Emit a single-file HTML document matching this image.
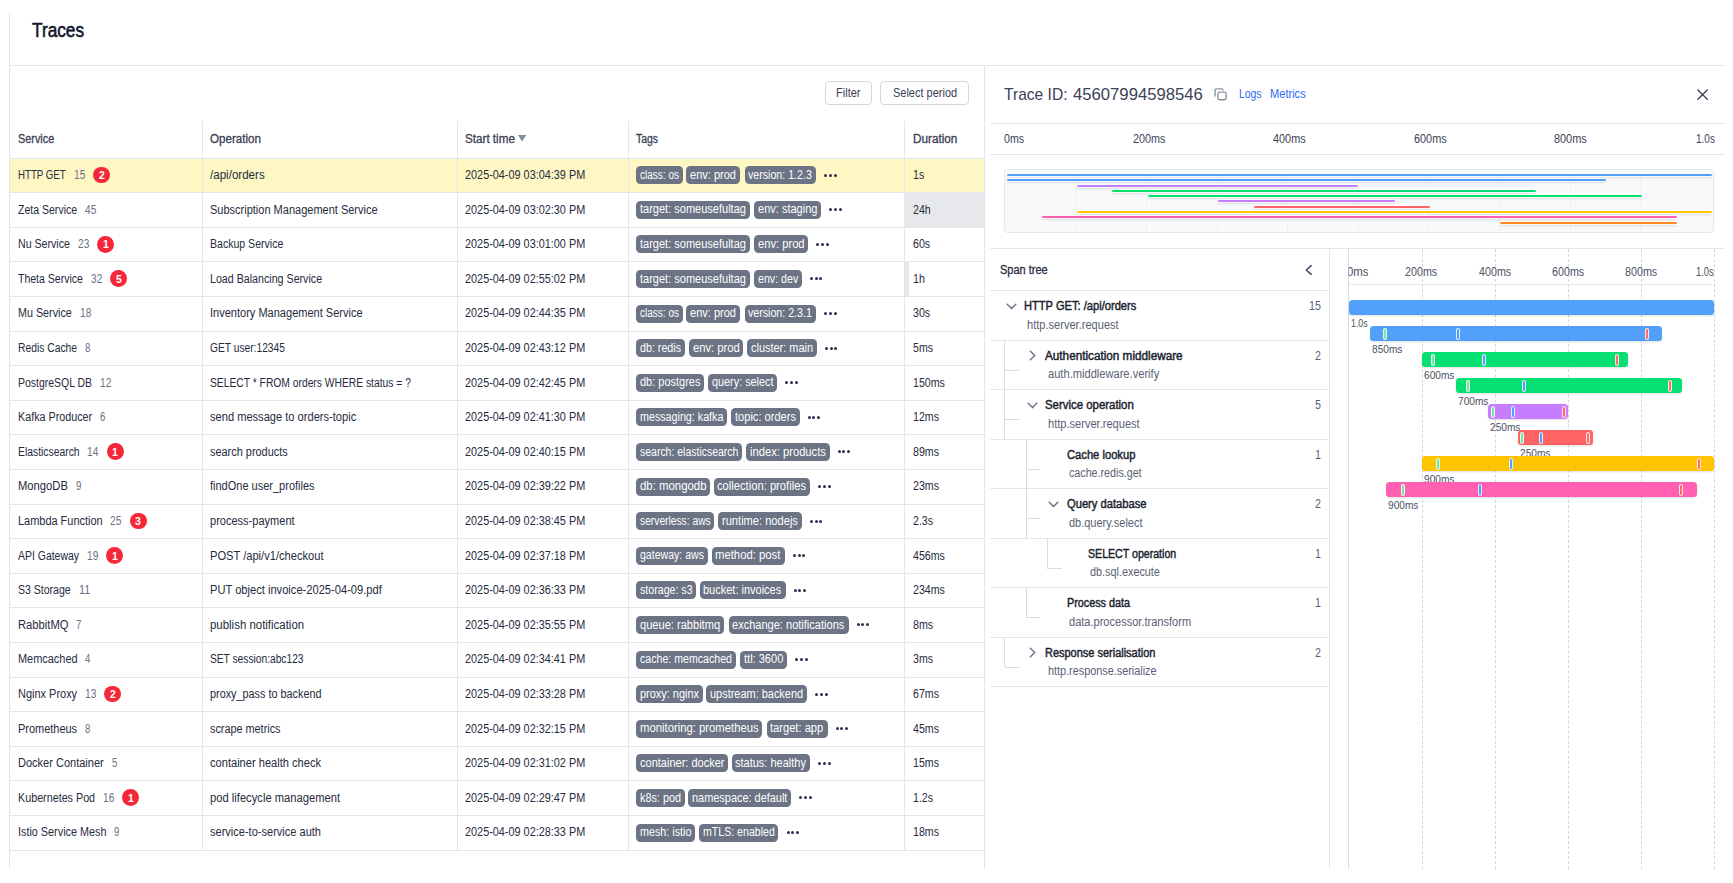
<!DOCTYPE html><html lang="en"><head><meta charset="utf-8"><title>Traces</title><style>

html,body{margin:0;padding:0;background:#fff}
body{width:1733px;height:883px;position:relative;overflow:hidden;font-family:"Liberation Sans", sans-serif}
#pg div,#pg svg,#pg span{position:absolute;display:block}
#pg span{white-space:nowrap;line-height:16px;height:16px;transform-origin:0 50%}

</style></head><body><div id="pg">
<div style="left:9.00px;top:14.00px;width:1.00px;height:855.00px;background:#e3e6ec"></div>
<div style="left:9.50px;top:64.90px;width:1715.30px;height:1.00px;background:#e3e6ec"></div>
<div style="left:824.50px;top:81.20px;width:47.20px;height:23.90px;border:1px solid #d3d7df;border-radius:4px;box-sizing:border-box;background:#fff"></div>
<div style="left:880.20px;top:81.20px;width:88.60px;height:23.90px;border:1px solid #d3d7df;border-radius:4px;box-sizing:border-box;background:#fff"></div>
<div style="left:10.00px;top:158.10px;width:974.30px;height:34.60px;background:#fef7c3"></div>
<div style="left:905.30px;top:192.70px;width:79.00px;height:34.60px;background:#e6e8ec"></div>
<div style="left:905.30px;top:261.90px;width:3.30px;height:34.60px;background:#e6e8ec"></div>
<svg style="left:518.3px;top:135px;width:8.2px;height:6.6px" viewBox="0 0 8.2 6.6"><path d="M0 0H8.2L4.1 6.6Z" fill="#7d8fa3"/></svg>
<div style="left:201.90px;top:120.50px;width:1.00px;height:729.60px;background:#e3e6ec"></div>
<div style="left:456.90px;top:120.50px;width:1.00px;height:729.60px;background:#e3e6ec"></div>
<div style="left:627.60px;top:120.50px;width:1.00px;height:729.60px;background:#e3e6ec"></div>
<div style="left:904.30px;top:120.50px;width:1.00px;height:729.60px;background:#e3e6ec"></div>
<div style="left:9.50px;top:157.60px;width:974.80px;height:1.00px;background:#e3e6ec"></div>
<div style="left:9.50px;top:192.20px;width:974.80px;height:1.00px;background:#e3e6ec"></div>
<div style="left:9.50px;top:226.80px;width:974.80px;height:1.00px;background:#e3e6ec"></div>
<div style="left:9.50px;top:261.40px;width:974.80px;height:1.00px;background:#e3e6ec"></div>
<div style="left:9.50px;top:296.00px;width:974.80px;height:1.00px;background:#e3e6ec"></div>
<div style="left:9.50px;top:330.60px;width:974.80px;height:1.00px;background:#e3e6ec"></div>
<div style="left:9.50px;top:365.20px;width:974.80px;height:1.00px;background:#e3e6ec"></div>
<div style="left:9.50px;top:399.80px;width:974.80px;height:1.00px;background:#e3e6ec"></div>
<div style="left:9.50px;top:434.40px;width:974.80px;height:1.00px;background:#e3e6ec"></div>
<div style="left:9.50px;top:469.00px;width:974.80px;height:1.00px;background:#e3e6ec"></div>
<div style="left:9.50px;top:503.60px;width:974.80px;height:1.00px;background:#e3e6ec"></div>
<div style="left:9.50px;top:538.20px;width:974.80px;height:1.00px;background:#e3e6ec"></div>
<div style="left:9.50px;top:572.80px;width:974.80px;height:1.00px;background:#e3e6ec"></div>
<div style="left:9.50px;top:607.40px;width:974.80px;height:1.00px;background:#e3e6ec"></div>
<div style="left:9.50px;top:642.00px;width:974.80px;height:1.00px;background:#e3e6ec"></div>
<div style="left:9.50px;top:676.60px;width:974.80px;height:1.00px;background:#e3e6ec"></div>
<div style="left:9.50px;top:711.20px;width:974.80px;height:1.00px;background:#e3e6ec"></div>
<div style="left:9.50px;top:745.80px;width:974.80px;height:1.00px;background:#e3e6ec"></div>
<div style="left:9.50px;top:780.40px;width:974.80px;height:1.00px;background:#e3e6ec"></div>
<div style="left:9.50px;top:815.00px;width:974.80px;height:1.00px;background:#e3e6ec"></div>
<div style="left:9.50px;top:849.60px;width:974.80px;height:1.00px;background:#e3e6ec"></div>
<div style="left:93.07px;top:166.60px;width:16.80px;height:16.80px;background:#f5283a;border-radius:50%"></div>
<div style="left:636.10px;top:166.20px;width:46.60px;height:18.00px;background:#6b7385;border-radius:4.5px"></div>
<div style="left:686.00px;top:166.20px;width:53.60px;height:18.00px;background:#6b7385;border-radius:4.5px"></div>
<div style="left:744.60px;top:166.20px;width:71.40px;height:18.00px;background:#6b7385;border-radius:4.5px"></div>
<div style="left:824.00px;top:173.60px;width:3.00px;height:3.00px;background:#2a3050;border-radius:50%"></div>
<div style="left:828.75px;top:173.60px;width:3.00px;height:3.00px;background:#2a3050;border-radius:50%"></div>
<div style="left:833.50px;top:173.60px;width:3.00px;height:3.00px;background:#2a3050;border-radius:50%"></div>
<div style="left:636.10px;top:200.80px;width:113.50px;height:18.00px;background:#6b7385;border-radius:4.5px"></div>
<div style="left:754.00px;top:200.80px;width:67.00px;height:18.00px;background:#6b7385;border-radius:4.5px"></div>
<div style="left:829.00px;top:208.20px;width:3.00px;height:3.00px;background:#2a3050;border-radius:50%"></div>
<div style="left:833.75px;top:208.20px;width:3.00px;height:3.00px;background:#2a3050;border-radius:50%"></div>
<div style="left:838.50px;top:208.20px;width:3.00px;height:3.00px;background:#2a3050;border-radius:50%"></div>
<div style="left:97.27px;top:235.80px;width:16.80px;height:16.80px;background:#f5283a;border-radius:50%"></div>
<div style="left:636.10px;top:235.40px;width:113.50px;height:18.00px;background:#6b7385;border-radius:4.5px"></div>
<div style="left:754.00px;top:235.40px;width:54.20px;height:18.00px;background:#6b7385;border-radius:4.5px"></div>
<div style="left:816.20px;top:242.80px;width:3.00px;height:3.00px;background:#2a3050;border-radius:50%"></div>
<div style="left:820.95px;top:242.80px;width:3.00px;height:3.00px;background:#2a3050;border-radius:50%"></div>
<div style="left:825.70px;top:242.80px;width:3.00px;height:3.00px;background:#2a3050;border-radius:50%"></div>
<div style="left:110.27px;top:270.40px;width:16.80px;height:16.80px;background:#f5283a;border-radius:50%"></div>
<div style="left:636.10px;top:270.00px;width:113.50px;height:18.00px;background:#6b7385;border-radius:4.5px"></div>
<div style="left:754.00px;top:270.00px;width:47.80px;height:18.00px;background:#6b7385;border-radius:4.5px"></div>
<div style="left:809.80px;top:277.40px;width:3.00px;height:3.00px;background:#2a3050;border-radius:50%"></div>
<div style="left:814.55px;top:277.40px;width:3.00px;height:3.00px;background:#2a3050;border-radius:50%"></div>
<div style="left:819.30px;top:277.40px;width:3.00px;height:3.00px;background:#2a3050;border-radius:50%"></div>
<div style="left:636.10px;top:304.60px;width:46.60px;height:18.00px;background:#6b7385;border-radius:4.5px"></div>
<div style="left:686.00px;top:304.60px;width:53.60px;height:18.00px;background:#6b7385;border-radius:4.5px"></div>
<div style="left:744.60px;top:304.60px;width:71.40px;height:18.00px;background:#6b7385;border-radius:4.5px"></div>
<div style="left:824.00px;top:312.00px;width:3.00px;height:3.00px;background:#2a3050;border-radius:50%"></div>
<div style="left:828.75px;top:312.00px;width:3.00px;height:3.00px;background:#2a3050;border-radius:50%"></div>
<div style="left:833.50px;top:312.00px;width:3.00px;height:3.00px;background:#2a3050;border-radius:50%"></div>
<div style="left:636.10px;top:339.20px;width:48.60px;height:18.00px;background:#6b7385;border-radius:4.5px"></div>
<div style="left:689.10px;top:339.20px;width:54.40px;height:18.00px;background:#6b7385;border-radius:4.5px"></div>
<div style="left:747.10px;top:339.20px;width:69.70px;height:18.00px;background:#6b7385;border-radius:4.5px"></div>
<div style="left:824.80px;top:346.60px;width:3.00px;height:3.00px;background:#2a3050;border-radius:50%"></div>
<div style="left:829.55px;top:346.60px;width:3.00px;height:3.00px;background:#2a3050;border-radius:50%"></div>
<div style="left:834.30px;top:346.60px;width:3.00px;height:3.00px;background:#2a3050;border-radius:50%"></div>
<div style="left:636.10px;top:373.80px;width:68.00px;height:18.00px;background:#6b7385;border-radius:4.5px"></div>
<div style="left:708.30px;top:373.80px;width:69.10px;height:18.00px;background:#6b7385;border-radius:4.5px"></div>
<div style="left:785.40px;top:381.20px;width:3.00px;height:3.00px;background:#2a3050;border-radius:50%"></div>
<div style="left:790.15px;top:381.20px;width:3.00px;height:3.00px;background:#2a3050;border-radius:50%"></div>
<div style="left:794.90px;top:381.20px;width:3.00px;height:3.00px;background:#2a3050;border-radius:50%"></div>
<div style="left:636.10px;top:408.40px;width:91.00px;height:18.00px;background:#6b7385;border-radius:4.5px"></div>
<div style="left:731.00px;top:408.40px;width:68.60px;height:18.00px;background:#6b7385;border-radius:4.5px"></div>
<div style="left:807.60px;top:415.80px;width:3.00px;height:3.00px;background:#2a3050;border-radius:50%"></div>
<div style="left:812.35px;top:415.80px;width:3.00px;height:3.00px;background:#2a3050;border-radius:50%"></div>
<div style="left:817.10px;top:415.80px;width:3.00px;height:3.00px;background:#2a3050;border-radius:50%"></div>
<div style="left:106.97px;top:443.40px;width:16.80px;height:16.80px;background:#f5283a;border-radius:50%"></div>
<div style="left:636.10px;top:443.00px;width:106.00px;height:18.00px;background:#6b7385;border-radius:4.5px"></div>
<div style="left:746.00px;top:443.00px;width:83.50px;height:18.00px;background:#6b7385;border-radius:4.5px"></div>
<div style="left:837.50px;top:450.40px;width:3.00px;height:3.00px;background:#2a3050;border-radius:50%"></div>
<div style="left:842.25px;top:450.40px;width:3.00px;height:3.00px;background:#2a3050;border-radius:50%"></div>
<div style="left:847.00px;top:450.40px;width:3.00px;height:3.00px;background:#2a3050;border-radius:50%"></div>
<div style="left:636.10px;top:477.60px;width:74.10px;height:18.00px;background:#6b7385;border-radius:4.5px"></div>
<div style="left:713.80px;top:477.60px;width:96.60px;height:18.00px;background:#6b7385;border-radius:4.5px"></div>
<div style="left:818.40px;top:485.00px;width:3.00px;height:3.00px;background:#2a3050;border-radius:50%"></div>
<div style="left:823.15px;top:485.00px;width:3.00px;height:3.00px;background:#2a3050;border-radius:50%"></div>
<div style="left:827.90px;top:485.00px;width:3.00px;height:3.00px;background:#2a3050;border-radius:50%"></div>
<div style="left:129.97px;top:512.60px;width:16.80px;height:16.80px;background:#f5283a;border-radius:50%"></div>
<div style="left:636.10px;top:512.20px;width:78.30px;height:18.00px;background:#6b7385;border-radius:4.5px"></div>
<div style="left:718.30px;top:512.20px;width:83.50px;height:18.00px;background:#6b7385;border-radius:4.5px"></div>
<div style="left:809.80px;top:519.60px;width:3.00px;height:3.00px;background:#2a3050;border-radius:50%"></div>
<div style="left:814.55px;top:519.60px;width:3.00px;height:3.00px;background:#2a3050;border-radius:50%"></div>
<div style="left:819.30px;top:519.60px;width:3.00px;height:3.00px;background:#2a3050;border-radius:50%"></div>
<div style="left:106.37px;top:547.20px;width:16.80px;height:16.80px;background:#f5283a;border-radius:50%"></div>
<div style="left:636.10px;top:546.80px;width:71.60px;height:18.00px;background:#6b7385;border-radius:4.5px"></div>
<div style="left:711.90px;top:546.80px;width:73.00px;height:18.00px;background:#6b7385;border-radius:4.5px"></div>
<div style="left:792.90px;top:554.20px;width:3.00px;height:3.00px;background:#2a3050;border-radius:50%"></div>
<div style="left:797.65px;top:554.20px;width:3.00px;height:3.00px;background:#2a3050;border-radius:50%"></div>
<div style="left:802.40px;top:554.20px;width:3.00px;height:3.00px;background:#2a3050;border-radius:50%"></div>
<div style="left:636.10px;top:581.40px;width:60.20px;height:18.00px;background:#6b7385;border-radius:4.5px"></div>
<div style="left:699.90px;top:581.40px;width:85.80px;height:18.00px;background:#6b7385;border-radius:4.5px"></div>
<div style="left:793.70px;top:588.80px;width:3.00px;height:3.00px;background:#2a3050;border-radius:50%"></div>
<div style="left:798.45px;top:588.80px;width:3.00px;height:3.00px;background:#2a3050;border-radius:50%"></div>
<div style="left:803.20px;top:588.80px;width:3.00px;height:3.00px;background:#2a3050;border-radius:50%"></div>
<div style="left:636.10px;top:616.00px;width:87.70px;height:18.00px;background:#6b7385;border-radius:4.5px"></div>
<div style="left:728.80px;top:616.00px;width:119.90px;height:18.00px;background:#6b7385;border-radius:4.5px"></div>
<div style="left:856.70px;top:623.40px;width:3.00px;height:3.00px;background:#2a3050;border-radius:50%"></div>
<div style="left:861.45px;top:623.40px;width:3.00px;height:3.00px;background:#2a3050;border-radius:50%"></div>
<div style="left:866.20px;top:623.40px;width:3.00px;height:3.00px;background:#2a3050;border-radius:50%"></div>
<div style="left:636.10px;top:650.60px;width:99.60px;height:18.00px;background:#6b7385;border-radius:4.5px"></div>
<div style="left:740.20px;top:650.60px;width:46.90px;height:18.00px;background:#6b7385;border-radius:4.5px"></div>
<div style="left:795.10px;top:658.00px;width:3.00px;height:3.00px;background:#2a3050;border-radius:50%"></div>
<div style="left:799.85px;top:658.00px;width:3.00px;height:3.00px;background:#2a3050;border-radius:50%"></div>
<div style="left:804.60px;top:658.00px;width:3.00px;height:3.00px;background:#2a3050;border-radius:50%"></div>
<div style="left:104.47px;top:685.60px;width:16.80px;height:16.80px;background:#f5283a;border-radius:50%"></div>
<div style="left:636.10px;top:685.20px;width:66.60px;height:18.00px;background:#6b7385;border-radius:4.5px"></div>
<div style="left:706.30px;top:685.20px;width:100.70px;height:18.00px;background:#6b7385;border-radius:4.5px"></div>
<div style="left:815.00px;top:692.60px;width:3.00px;height:3.00px;background:#2a3050;border-radius:50%"></div>
<div style="left:819.75px;top:692.60px;width:3.00px;height:3.00px;background:#2a3050;border-radius:50%"></div>
<div style="left:824.50px;top:692.60px;width:3.00px;height:3.00px;background:#2a3050;border-radius:50%"></div>
<div style="left:636.10px;top:719.80px;width:126.30px;height:18.00px;background:#6b7385;border-radius:4.5px"></div>
<div style="left:766.80px;top:719.80px;width:60.80px;height:18.00px;background:#6b7385;border-radius:4.5px"></div>
<div style="left:835.60px;top:727.20px;width:3.00px;height:3.00px;background:#2a3050;border-radius:50%"></div>
<div style="left:840.35px;top:727.20px;width:3.00px;height:3.00px;background:#2a3050;border-radius:50%"></div>
<div style="left:845.10px;top:727.20px;width:3.00px;height:3.00px;background:#2a3050;border-radius:50%"></div>
<div style="left:636.10px;top:754.40px;width:92.10px;height:18.00px;background:#6b7385;border-radius:4.5px"></div>
<div style="left:731.90px;top:754.40px;width:78.50px;height:18.00px;background:#6b7385;border-radius:4.5px"></div>
<div style="left:818.40px;top:761.80px;width:3.00px;height:3.00px;background:#2a3050;border-radius:50%"></div>
<div style="left:823.15px;top:761.80px;width:3.00px;height:3.00px;background:#2a3050;border-radius:50%"></div>
<div style="left:827.90px;top:761.80px;width:3.00px;height:3.00px;background:#2a3050;border-radius:50%"></div>
<div style="left:122.47px;top:789.40px;width:16.80px;height:16.80px;background:#f5283a;border-radius:50%"></div>
<div style="left:636.10px;top:789.00px;width:48.60px;height:18.00px;background:#6b7385;border-radius:4.5px"></div>
<div style="left:688.30px;top:789.00px;width:103.00px;height:18.00px;background:#6b7385;border-radius:4.5px"></div>
<div style="left:799.30px;top:796.40px;width:3.00px;height:3.00px;background:#2a3050;border-radius:50%"></div>
<div style="left:804.05px;top:796.40px;width:3.00px;height:3.00px;background:#2a3050;border-radius:50%"></div>
<div style="left:808.80px;top:796.40px;width:3.00px;height:3.00px;background:#2a3050;border-radius:50%"></div>
<div style="left:636.10px;top:823.60px;width:59.10px;height:18.00px;background:#6b7385;border-radius:4.5px"></div>
<div style="left:699.10px;top:823.60px;width:79.40px;height:18.00px;background:#6b7385;border-radius:4.5px"></div>
<div style="left:786.50px;top:831.00px;width:3.00px;height:3.00px;background:#2a3050;border-radius:50%"></div>
<div style="left:791.25px;top:831.00px;width:3.00px;height:3.00px;background:#2a3050;border-radius:50%"></div>
<div style="left:796.00px;top:831.00px;width:3.00px;height:3.00px;background:#2a3050;border-radius:50%"></div>
<div style="left:983.80px;top:65.40px;width:1.00px;height:803.60px;background:#e3e6ec"></div>
<svg style="left:1213px;top:86.5px;width:15px;height:15px" viewBox="0 0 15 15" fill="none" stroke="#8b919d" stroke-width="1.35" stroke-linecap="round"><rect x="4.9" y="5.1" width="8.3" height="7.6" rx="1.8"/><path d="M2 9.1V3.6Q2 1.8 3.8 1.8H8.6Q9.9 1.8 10.2 2.9"/></svg>
<svg style="left:1697.2px;top:88.6px;width:11.2px;height:11.2px" viewBox="0 0 11.2 11.2" fill="none" stroke="#3c4257" stroke-width="1.35" stroke-linecap="round"><path d="M0.9 0.9L10.3 10.3M10.3 0.9L0.9 10.3"/></svg>
<div style="left:989.70px;top:123.00px;width:735.10px;height:1.00px;background:#e3e6ec"></div>
<div style="left:989.70px;top:153.50px;width:735.10px;height:1.00px;background:#e3e6ec"></div>
<div style="left:1004.10px;top:169.20px;width:709.80px;height:63.40px;background:#f8f9fb;border:1px solid #e6e8ec;border-radius:3.5px;box-sizing:border-box"></div>
<div style="left:1075.65px;top:170.20px;width:0;height:61.40px;border-left:1px dashed #eceef2"></div>
<div style="left:1146.20px;top:170.20px;width:0;height:61.40px;border-left:1px dashed #eceef2"></div>
<div style="left:1216.75px;top:170.20px;width:0;height:61.40px;border-left:1px dashed #eceef2"></div>
<div style="left:1287.30px;top:170.20px;width:0;height:61.40px;border-left:1px dashed #eceef2"></div>
<div style="left:1357.85px;top:170.20px;width:0;height:61.40px;border-left:1px dashed #eceef2"></div>
<div style="left:1428.40px;top:170.20px;width:0;height:61.40px;border-left:1px dashed #eceef2"></div>
<div style="left:1498.95px;top:170.20px;width:0;height:61.40px;border-left:1px dashed #eceef2"></div>
<div style="left:1569.50px;top:170.20px;width:0;height:61.40px;border-left:1px dashed #eceef2"></div>
<div style="left:1640.05px;top:170.20px;width:0;height:61.40px;border-left:1px dashed #eceef2"></div>
<div style="left:1006.60px;top:173.90px;width:705.50px;height:2.10px;background:#52a0fb;border-radius:1px;box-shadow:0 0 0 0.8px rgba(255,255,255,.85),0 2px 2.5px rgba(0,0,0,.13)"></div>
<div style="left:1006.60px;top:179.20px;width:599.67px;height:2.10px;background:#52a0fb;border-radius:1px;box-shadow:0 0 0 0.8px rgba(255,255,255,.85),0 2px 2.5px rgba(0,0,0,.13)"></div>
<div style="left:1077.15px;top:184.50px;width:280.44px;height:2.10px;background:#c77dff;border-radius:1px;box-shadow:0 0 0 0.8px rgba(255,255,255,.85),0 2px 2.5px rgba(0,0,0,.13)"></div>
<div style="left:1112.42px;top:189.80px;width:423.30px;height:2.10px;background:#06df72;border-radius:1px;box-shadow:0 0 0 0.8px rgba(255,255,255,.85),0 2px 2.5px rgba(0,0,0,.13)"></div>
<div style="left:1147.70px;top:195.10px;width:493.85px;height:2.10px;background:#06df72;border-radius:1px;box-shadow:0 0 0 0.8px rgba(255,255,255,.85),0 2px 2.5px rgba(0,0,0,.13)"></div>
<div style="left:1218.25px;top:200.40px;width:176.38px;height:2.10px;background:#c77dff;border-radius:1px;box-shadow:0 0 0 0.8px rgba(255,255,255,.85),0 2px 2.5px rgba(0,0,0,.13)"></div>
<div style="left:1253.53px;top:205.70px;width:176.38px;height:2.10px;background:#ff6363;border-radius:1px;box-shadow:0 0 0 0.8px rgba(255,255,255,.85),0 2px 2.5px rgba(0,0,0,.13)"></div>
<div style="left:1077.15px;top:211.00px;width:634.95px;height:2.10px;background:#ffc400;border-radius:1px;box-shadow:0 0 0 0.8px rgba(255,255,255,.85),0 2px 2.5px rgba(0,0,0,.13)"></div>
<div style="left:1041.88px;top:216.30px;width:634.95px;height:2.10px;background:#ff60b2;border-radius:1px;box-shadow:0 0 0 0.8px rgba(255,255,255,.85),0 2px 2.5px rgba(0,0,0,.13)"></div>
<div style="left:1500.45px;top:221.60px;width:176.38px;height:2.10px;background:#ff8a1c;border-radius:1px;box-shadow:0 0 0 0.8px rgba(255,255,255,.85),0 2px 2.5px rgba(0,0,0,.13)"></div>
<div style="left:989.70px;top:248.10px;width:735.10px;height:1.00px;background:#e3e6ec"></div>
<div style="left:1329.00px;top:248.60px;width:1.00px;height:620.40px;background:#e3e6ec"></div>
<svg style="left:1303.5px;top:264px;width:10px;height:12px" viewBox="0 0 10 12" fill="none" stroke="#3c4257" stroke-width="1.4" stroke-linecap="round" stroke-linejoin="round"><path d="M7.2 1.6L2.2 6L7.2 10.4"/></svg>
<div style="left:989.70px;top:290.05px;width:339.80px;height:1.00px;background:#e3e6ec"></div>
<div style="left:989.70px;top:339.55px;width:339.80px;height:1.00px;background:#e3e6ec"></div>
<div style="left:989.70px;top:389.05px;width:339.80px;height:1.00px;background:#e3e6ec"></div>
<div style="left:989.70px;top:438.55px;width:339.80px;height:1.00px;background:#e3e6ec"></div>
<div style="left:989.70px;top:488.05px;width:339.80px;height:1.00px;background:#e3e6ec"></div>
<div style="left:989.70px;top:537.55px;width:339.80px;height:1.00px;background:#e3e6ec"></div>
<div style="left:989.70px;top:587.05px;width:339.80px;height:1.00px;background:#e3e6ec"></div>
<div style="left:989.70px;top:636.55px;width:339.80px;height:1.00px;background:#e3e6ec"></div>
<div style="left:989.70px;top:686.05px;width:339.80px;height:1.00px;background:#e3e6ec"></div>
<svg style="left:1005.50px;top:301.75px;width:11px;height:9px" viewBox="0 0 11 9" fill="none" stroke="#6b7888" stroke-width="1.5" stroke-linecap="round" stroke-linejoin="round"><path d="M1.2 2.2L5.5 6.6L9.8 2.2"/></svg>
<div style="left:1004.20px;top:340.05px;width:1.00px;height:49.50px;background:#d9dce3"></div>
<div style="left:1004.70px;top:369.75px;width:14.40px;height:1.00px;background:#d9dce3"></div>
<svg style="left:1028.10px;top:349.65px;width:9px;height:11px" viewBox="0 0 9 11" fill="none" stroke="#6b7888" stroke-width="1.5" stroke-linecap="round" stroke-linejoin="round"><path d="M2.4 1.2L6.8 5.5L2.4 9.8"/></svg>
<div style="left:1004.20px;top:389.55px;width:1.00px;height:49.50px;background:#d9dce3"></div>
<div style="left:1004.70px;top:419.25px;width:14.40px;height:1.00px;background:#d9dce3"></div>
<svg style="left:1026.80px;top:400.75px;width:11px;height:9px" viewBox="0 0 11 9" fill="none" stroke="#6b7888" stroke-width="1.5" stroke-linecap="round" stroke-linejoin="round"><path d="M1.2 2.2L5.5 6.6L9.8 2.2"/></svg>
<div style="left:1025.50px;top:439.05px;width:1.00px;height:49.50px;background:#d9dce3"></div>
<div style="left:1026.00px;top:468.75px;width:14.40px;height:1.00px;background:#d9dce3"></div>
<div style="left:1025.50px;top:488.55px;width:1.00px;height:49.50px;background:#d9dce3"></div>
<div style="left:1026.00px;top:518.25px;width:14.40px;height:1.00px;background:#d9dce3"></div>
<svg style="left:1048.10px;top:499.75px;width:11px;height:9px" viewBox="0 0 11 9" fill="none" stroke="#6b7888" stroke-width="1.5" stroke-linecap="round" stroke-linejoin="round"><path d="M1.2 2.2L5.5 6.6L9.8 2.2"/></svg>
<div style="left:1046.80px;top:538.05px;width:1.00px;height:30.20px;background:#d9dce3"></div>
<div style="left:1047.30px;top:567.75px;width:14.40px;height:1.00px;background:#d9dce3"></div>
<div style="left:1025.50px;top:587.55px;width:1.00px;height:30.20px;background:#d9dce3"></div>
<div style="left:1026.00px;top:617.25px;width:14.40px;height:1.00px;background:#d9dce3"></div>
<div style="left:1004.20px;top:637.05px;width:1.00px;height:30.20px;background:#d9dce3"></div>
<div style="left:1004.70px;top:666.75px;width:14.40px;height:1.00px;background:#d9dce3"></div>
<svg style="left:1028.10px;top:646.65px;width:9px;height:11px" viewBox="0 0 9 11" fill="none" stroke="#6b7888" stroke-width="1.5" stroke-linecap="round" stroke-linejoin="round"><path d="M2.4 1.2L6.8 5.5L2.4 9.8"/></svg>
<div style="left:1348.10px;top:248.60px;width:1.00px;height:620.40px;background:#d9dce3"></div>
<div style="left:1348.60px;top:284.40px;width:366.00px;height:1.00px;background:#e6e8ee"></div>
<div style="left:1421.50px;top:249px;width:0;height:620px;border-left:1px dashed #d4d7de"></div>
<div style="left:1494.70px;top:249px;width:0;height:620px;border-left:1px dashed #d4d7de"></div>
<div style="left:1567.90px;top:249px;width:0;height:620px;border-left:1px dashed #d4d7de"></div>
<div style="left:1641.10px;top:249px;width:0;height:620px;border-left:1px dashed #d4d7de"></div>
<div style="left:1714.30px;top:249px;width:0;height:620px;border-left:1px dashed #d4d7de"></div>
<div style="left:1348.60px;top:300.30px;width:365.90px;height:14.60px;background:#52a0fb;border-radius:3.5px;box-shadow:0 1px 2px rgba(0,0,0,.13);z-index:10"></div>
<div style="left:1369.60px;top:326.30px;width:292.90px;height:14.60px;background:#52a0fb;border-radius:3.5px;box-shadow:0 1px 2px rgba(0,0,0,.13);z-index:12"></div>
<div style="left:1383.04px;top:327.80px;width:4.00px;height:11.80px;background:#78e6a4;border:1px solid rgba(255,255,255,.82);border-radius:2.2px;box-sizing:border-box;z-index:12"></div>
<div style="left:1456.07px;top:327.80px;width:4.00px;height:11.80px;background:#52a0fb;border:1px solid rgba(255,255,255,.82);border-radius:2.2px;box-sizing:border-box;z-index:12"></div>
<div style="left:1645.26px;top:327.80px;width:4.00px;height:11.80px;background:#ff6b6b;border:1px solid rgba(255,255,255,.82);border-radius:2.2px;box-sizing:border-box;z-index:12"></div>
<div style="left:1422.10px;top:352.30px;width:205.90px;height:14.60px;background:#06df72;border-radius:3.5px;box-shadow:0 1px 2px rgba(0,0,0,.13);z-index:14"></div>
<div style="left:1431.19px;top:353.80px;width:4.00px;height:11.80px;background:#78e6a4;border:1px solid rgba(255,255,255,.82);border-radius:2.2px;box-sizing:border-box;z-index:14"></div>
<div style="left:1482.47px;top:353.80px;width:4.00px;height:11.80px;background:#52a0fb;border:1px solid rgba(255,255,255,.82);border-radius:2.2px;box-sizing:border-box;z-index:14"></div>
<div style="left:1615.11px;top:353.80px;width:4.00px;height:11.80px;background:#ff6b6b;border:1px solid rgba(255,255,255,.82);border-radius:2.2px;box-sizing:border-box;z-index:14"></div>
<div style="left:1455.60px;top:378.30px;width:226.80px;height:14.60px;background:#06df72;border-radius:3.5px;box-shadow:0 1px 2px rgba(0,0,0,.13);z-index:16"></div>
<div style="left:1465.74px;top:379.80px;width:4.00px;height:11.80px;background:#78e6a4;border:1px solid rgba(255,255,255,.82);border-radius:2.2px;box-sizing:border-box;z-index:16"></div>
<div style="left:1522.24px;top:379.80px;width:4.00px;height:11.80px;background:#52a0fb;border:1px solid rgba(255,255,255,.82);border-radius:2.2px;box-sizing:border-box;z-index:16"></div>
<div style="left:1668.46px;top:379.80px;width:4.00px;height:11.80px;background:#ff6b6b;border:1px solid rgba(255,255,255,.82);border-radius:2.2px;box-sizing:border-box;z-index:16"></div>
<div style="left:1488.10px;top:404.30px;width:80.20px;height:14.60px;background:#c77dff;border-radius:3.5px;box-shadow:0 1px 2px rgba(0,0,0,.13);z-index:18"></div>
<div style="left:1490.91px;top:405.80px;width:4.00px;height:11.80px;background:#78e6a4;border:1px solid rgba(255,255,255,.82);border-radius:2.2px;box-sizing:border-box;z-index:18"></div>
<div style="left:1510.76px;top:405.80px;width:4.00px;height:11.80px;background:#52a0fb;border:1px solid rgba(255,255,255,.82);border-radius:2.2px;box-sizing:border-box;z-index:18"></div>
<div style="left:1561.69px;top:405.80px;width:4.00px;height:11.80px;background:#ff6b6b;border:1px solid rgba(255,255,255,.82);border-radius:2.2px;box-sizing:border-box;z-index:18"></div>
<div style="left:1517.60px;top:430.30px;width:75.20px;height:14.60px;background:#ff6363;border-radius:3.5px;box-shadow:0 1px 2px rgba(0,0,0,.13);z-index:20"></div>
<div style="left:1520.16px;top:431.80px;width:4.00px;height:11.80px;background:#78e6a4;border:1px solid rgba(255,255,255,.82);border-radius:2.2px;box-sizing:border-box;z-index:20"></div>
<div style="left:1538.76px;top:431.80px;width:4.00px;height:11.80px;background:#52a0fb;border:1px solid rgba(255,255,255,.82);border-radius:2.2px;box-sizing:border-box;z-index:20"></div>
<div style="left:1586.44px;top:431.80px;width:4.00px;height:11.80px;background:#ff6b6b;border:1px solid rgba(255,255,255,.82);border-radius:2.2px;box-sizing:border-box;z-index:20"></div>
<div style="left:1422.30px;top:456.30px;width:292.20px;height:14.60px;background:#ffc400;border-radius:3.5px;box-shadow:0 1px 2px rgba(0,0,0,.13);z-index:22"></div>
<div style="left:1435.71px;top:457.80px;width:4.00px;height:11.80px;background:#78e6a4;border:1px solid rgba(255,255,255,.82);border-radius:2.2px;box-sizing:border-box;z-index:22"></div>
<div style="left:1508.56px;top:457.80px;width:4.00px;height:11.80px;background:#52a0fb;border:1px solid rgba(255,255,255,.82);border-radius:2.2px;box-sizing:border-box;z-index:22"></div>
<div style="left:1697.29px;top:457.80px;width:4.00px;height:11.80px;background:#ff6b6b;border:1px solid rgba(255,255,255,.82);border-radius:2.2px;box-sizing:border-box;z-index:22"></div>
<div style="left:1386.30px;top:482.30px;width:310.60px;height:14.60px;background:#ff60b2;border-radius:3.5px;box-shadow:0 1px 2px rgba(0,0,0,.13);z-index:24"></div>
<div style="left:1400.63px;top:483.80px;width:4.00px;height:11.80px;background:#78e6a4;border:1px solid rgba(255,255,255,.82);border-radius:2.2px;box-sizing:border-box;z-index:24"></div>
<div style="left:1478.08px;top:483.80px;width:4.00px;height:11.80px;background:#52a0fb;border:1px solid rgba(255,255,255,.82);border-radius:2.2px;box-sizing:border-box;z-index:24"></div>
<div style="left:1678.77px;top:483.80px;width:4.00px;height:11.80px;background:#ff6b6b;border:1px solid rgba(255,255,255,.82);border-radius:2.2px;box-sizing:border-box;z-index:24"></div>
<span style="font-size:20px;font-weight:400;color:#14182c;-webkit-text-stroke:0.6px;left:32.40px;top:21.50px;transform:scaleX(0.8627);">Traces</span>
<span style="font-size:12px;font-weight:400;color:#3a4056;left:836.40px;top:85.20px;transform:scaleX(0.9186);">Filter</span>
<span style="font-size:12px;font-weight:400;color:#3a4056;left:892.70px;top:85.20px;transform:scaleX(0.9151);">Select period</span>
<span style="font-size:12px;font-weight:400;color:#3a4056;-webkit-text-stroke:0.3px;left:17.70px;top:130.90px;transform:scaleX(0.9046);">Service</span>
<span style="font-size:12px;font-weight:400;color:#3a4056;-webkit-text-stroke:0.3px;left:209.80px;top:130.90px;transform:scaleX(0.9658);">Operation</span>
<span style="font-size:12px;font-weight:400;color:#3a4056;-webkit-text-stroke:0.3px;left:465.30px;top:130.90px;transform:scaleX(0.9716);">Start time</span>
<span style="font-size:12px;font-weight:400;color:#3a4056;-webkit-text-stroke:0.3px;left:635.90px;top:130.90px;transform:scaleX(0.8675);">Tags</span>
<span style="font-size:12px;font-weight:400;color:#3a4056;-webkit-text-stroke:0.3px;left:912.50px;top:130.90px;transform:scaleX(0.9766);">Duration</span>
<span style="font-size:12px;font-weight:400;color:#262b40;left:17.80px;top:167.00px;transform:scaleX(0.8068);">HTTP GET</span>
<span style="font-size:12px;font-weight:400;color:#6a7183;left:73.50px;top:167.00px;transform:scaleX(0.8438);">15</span>
<span style="font-size:11px;font-weight:700;color:#fff;left:98.56px;top:167.00px;transform:scaleX(0.9500);">2</span>
<span style="font-size:12px;font-weight:400;color:#262b40;left:210.00px;top:167.00px;transform:scaleX(0.9647);">/api/orders</span>
<span style="font-size:12px;font-weight:400;color:#262b40;left:465.40px;top:167.00px;transform:scaleX(0.9054);">2025-04-09 03:04:39 PM</span>
<span style="font-size:12px;font-weight:400;color:#fff;left:639.60px;top:166.80px;transform:scaleX(0.8353);">class: os</span>
<span style="font-size:12px;font-weight:400;color:#fff;left:689.50px;top:166.80px;transform:scaleX(0.9191);">env: prod</span>
<span style="font-size:12px;font-weight:400;color:#fff;left:748.10px;top:166.80px;transform:scaleX(0.8855);">version: 1.2.3</span>
<span style="font-size:12px;font-weight:400;color:#262b40;left:912.80px;top:167.00px;transform:scaleX(0.8850);">1s</span>
<span style="font-size:12px;font-weight:400;color:#262b40;left:17.80px;top:201.60px;transform:scaleX(0.8774);">Zeta Service</span>
<span style="font-size:12px;font-weight:400;color:#6a7183;left:84.90px;top:201.60px;transform:scaleX(0.8438);">45</span>
<span style="font-size:12px;font-weight:400;color:#262b40;left:210.00px;top:201.60px;transform:scaleX(0.9170);">Subscription Management Service</span>
<span style="font-size:12px;font-weight:400;color:#262b40;left:465.40px;top:201.60px;transform:scaleX(0.9054);">2025-04-09 03:02:30 PM</span>
<span style="font-size:12px;font-weight:400;color:#fff;left:639.60px;top:201.40px;transform:scaleX(0.9176);">target: someusefultag</span>
<span style="font-size:12px;font-weight:400;color:#fff;left:757.50px;top:201.40px;transform:scaleX(0.9178);">env: staging</span>
<span style="font-size:12px;font-weight:400;color:#262b40;left:912.80px;top:201.60px;transform:scaleX(0.8850);">24h</span>
<span style="font-size:12px;font-weight:400;color:#262b40;left:17.80px;top:236.20px;transform:scaleX(0.8843);">Nu Service</span>
<span style="font-size:12px;font-weight:400;color:#6a7183;left:77.70px;top:236.20px;transform:scaleX(0.8438);">23</span>
<span style="font-size:11px;font-weight:700;color:#fff;left:102.76px;top:236.20px;transform:scaleX(0.9500);">1</span>
<span style="font-size:12px;font-weight:400;color:#262b40;left:210.00px;top:236.20px;transform:scaleX(0.8792);">Backup Service</span>
<span style="font-size:12px;font-weight:400;color:#262b40;left:465.40px;top:236.20px;transform:scaleX(0.9054);">2025-04-09 03:01:00 PM</span>
<span style="font-size:12px;font-weight:400;color:#fff;left:639.60px;top:236.00px;transform:scaleX(0.9176);">target: someusefultag</span>
<span style="font-size:12px;font-weight:400;color:#fff;left:757.50px;top:236.00px;transform:scaleX(0.9311);">env: prod</span>
<span style="font-size:12px;font-weight:400;color:#262b40;left:912.80px;top:236.20px;transform:scaleX(0.8850);">60s</span>
<span style="font-size:12px;font-weight:400;color:#262b40;left:17.80px;top:270.80px;transform:scaleX(0.8765);">Theta Service</span>
<span style="font-size:12px;font-weight:400;color:#6a7183;left:90.70px;top:270.80px;transform:scaleX(0.8438);">32</span>
<span style="font-size:11px;font-weight:700;color:#fff;left:115.76px;top:270.80px;transform:scaleX(0.9500);">5</span>
<span style="font-size:12px;font-weight:400;color:#262b40;left:210.00px;top:270.80px;transform:scaleX(0.8890);">Load Balancing Service</span>
<span style="font-size:12px;font-weight:400;color:#262b40;left:465.40px;top:270.80px;transform:scaleX(0.9054);">2025-04-09 02:55:02 PM</span>
<span style="font-size:12px;font-weight:400;color:#fff;left:639.60px;top:270.60px;transform:scaleX(0.9176);">target: someusefultag</span>
<span style="font-size:12px;font-weight:400;color:#fff;left:757.50px;top:270.60px;transform:scaleX(0.8860);">env: dev</span>
<span style="font-size:12px;font-weight:400;color:#262b40;left:912.80px;top:270.80px;transform:scaleX(0.8850);">1h</span>
<span style="font-size:12px;font-weight:400;color:#262b40;left:17.80px;top:305.40px;transform:scaleX(0.8962);">Mu Service</span>
<span style="font-size:12px;font-weight:400;color:#6a7183;left:79.60px;top:305.40px;transform:scaleX(0.8438);">18</span>
<span style="font-size:12px;font-weight:400;color:#262b40;left:210.00px;top:305.40px;transform:scaleX(0.9188);">Inventory Management Service</span>
<span style="font-size:12px;font-weight:400;color:#262b40;left:465.40px;top:305.40px;transform:scaleX(0.9054);">2025-04-09 02:44:35 PM</span>
<span style="font-size:12px;font-weight:400;color:#fff;left:639.60px;top:305.20px;transform:scaleX(0.8353);">class: os</span>
<span style="font-size:12px;font-weight:400;color:#fff;left:689.50px;top:305.20px;transform:scaleX(0.9191);">env: prod</span>
<span style="font-size:12px;font-weight:400;color:#fff;left:748.10px;top:305.20px;transform:scaleX(0.8855);">version: 2.3.1</span>
<span style="font-size:12px;font-weight:400;color:#262b40;left:912.80px;top:305.40px;transform:scaleX(0.8850);">30s</span>
<span style="font-size:12px;font-weight:400;color:#262b40;left:17.80px;top:340.00px;transform:scaleX(0.8602);">Redis Cache</span>
<span style="font-size:12px;font-weight:400;color:#6a7183;left:84.90px;top:340.00px;transform:scaleX(0.7980);">8</span>
<span style="font-size:12px;font-weight:400;color:#262b40;left:210.00px;top:340.00px;transform:scaleX(0.8527);">GET user:12345</span>
<span style="font-size:12px;font-weight:400;color:#262b40;left:465.40px;top:340.00px;transform:scaleX(0.9054);">2025-04-09 02:43:12 PM</span>
<span style="font-size:12px;font-weight:400;color:#fff;left:639.60px;top:339.80px;transform:scaleX(0.8907);">db: redis</span>
<span style="font-size:12px;font-weight:400;color:#fff;left:692.60px;top:339.80px;transform:scaleX(0.9351);">env: prod</span>
<span style="font-size:12px;font-weight:400;color:#fff;left:750.60px;top:339.80px;transform:scaleX(0.9128);">cluster: main</span>
<span style="font-size:12px;font-weight:400;color:#262b40;left:912.80px;top:340.00px;transform:scaleX(0.8850);">5ms</span>
<span style="font-size:12px;font-weight:400;color:#262b40;left:17.80px;top:374.60px;transform:scaleX(0.8724);">PostgreSQL DB</span>
<span style="font-size:12px;font-weight:400;color:#6a7183;left:99.90px;top:374.60px;transform:scaleX(0.8438);">12</span>
<span style="font-size:12px;font-weight:400;color:#262b40;left:210.00px;top:374.60px;transform:scaleX(0.8579);">SELECT * FROM orders WHERE status = ?</span>
<span style="font-size:12px;font-weight:400;color:#262b40;left:465.40px;top:374.60px;transform:scaleX(0.9054);">2025-04-09 02:42:45 PM</span>
<span style="font-size:12px;font-weight:400;color:#fff;left:639.60px;top:374.40px;transform:scaleX(0.9145);">db: postgres</span>
<span style="font-size:12px;font-weight:400;color:#fff;left:711.80px;top:374.40px;transform:scaleX(0.9038);">query: select</span>
<span style="font-size:12px;font-weight:400;color:#262b40;left:912.80px;top:374.60px;transform:scaleX(0.8850);">150ms</span>
<span style="font-size:12px;font-weight:400;color:#262b40;left:17.80px;top:409.20px;transform:scaleX(0.8958);">Kafka Producer</span>
<span style="font-size:12px;font-weight:400;color:#6a7183;left:99.90px;top:409.20px;transform:scaleX(0.7980);">6</span>
<span style="font-size:12px;font-weight:400;color:#262b40;left:210.00px;top:409.20px;transform:scaleX(0.9248);">send message to orders-topic</span>
<span style="font-size:12px;font-weight:400;color:#262b40;left:465.40px;top:409.20px;transform:scaleX(0.9054);">2025-04-09 02:41:30 PM</span>
<span style="font-size:12px;font-weight:400;color:#fff;left:639.60px;top:409.00px;transform:scaleX(0.8930);">messaging: kafka</span>
<span style="font-size:12px;font-weight:400;color:#fff;left:734.50px;top:409.00px;transform:scaleX(0.9238);">topic: orders</span>
<span style="font-size:12px;font-weight:400;color:#262b40;left:912.80px;top:409.20px;transform:scaleX(0.8850);">12ms</span>
<span style="font-size:12px;font-weight:400;color:#262b40;left:17.80px;top:443.80px;transform:scaleX(0.8630);">Elasticsearch</span>
<span style="font-size:12px;font-weight:400;color:#6a7183;left:87.40px;top:443.80px;transform:scaleX(0.8438);">14</span>
<span style="font-size:11px;font-weight:700;color:#fff;left:112.46px;top:443.80px;transform:scaleX(0.9500);">1</span>
<span style="font-size:12px;font-weight:400;color:#262b40;left:210.00px;top:443.80px;transform:scaleX(0.9099);">search products</span>
<span style="font-size:12px;font-weight:400;color:#262b40;left:465.40px;top:443.80px;transform:scaleX(0.9054);">2025-04-09 02:40:15 PM</span>
<span style="font-size:12px;font-weight:400;color:#fff;left:639.60px;top:443.60px;transform:scaleX(0.8730);">search: elasticsearch</span>
<span style="font-size:12px;font-weight:400;color:#fff;left:749.50px;top:443.60px;transform:scaleX(0.9325);">index: products</span>
<span style="font-size:12px;font-weight:400;color:#262b40;left:912.80px;top:443.80px;transform:scaleX(0.8850);">89ms</span>
<span style="font-size:12px;font-weight:400;color:#262b40;left:17.80px;top:478.40px;transform:scaleX(0.9349);">MongoDB</span>
<span style="font-size:12px;font-weight:400;color:#6a7183;left:75.70px;top:478.40px;transform:scaleX(0.7980);">9</span>
<span style="font-size:12px;font-weight:400;color:#262b40;left:210.00px;top:478.40px;transform:scaleX(0.9169);">findOne user_profiles</span>
<span style="font-size:12px;font-weight:400;color:#262b40;left:465.40px;top:478.40px;transform:scaleX(0.9054);">2025-04-09 02:39:22 PM</span>
<span style="font-size:12px;font-weight:400;color:#fff;left:639.60px;top:478.20px;transform:scaleX(0.9492);">db: mongodb</span>
<span style="font-size:12px;font-weight:400;color:#fff;left:717.30px;top:478.20px;transform:scaleX(0.9330);">collection: profiles</span>
<span style="font-size:12px;font-weight:400;color:#262b40;left:912.80px;top:478.40px;transform:scaleX(0.8850);">23ms</span>
<span style="font-size:12px;font-weight:400;color:#262b40;left:17.80px;top:513.00px;transform:scaleX(0.9123);">Lambda Function</span>
<span style="font-size:12px;font-weight:400;color:#6a7183;left:110.40px;top:513.00px;transform:scaleX(0.8438);">25</span>
<span style="font-size:11px;font-weight:700;color:#fff;left:135.46px;top:513.00px;transform:scaleX(0.9500);">3</span>
<span style="font-size:12px;font-weight:400;color:#262b40;left:210.00px;top:513.00px;transform:scaleX(0.9191);">process-payment</span>
<span style="font-size:12px;font-weight:400;color:#262b40;left:465.40px;top:513.00px;transform:scaleX(0.9054);">2025-04-09 02:38:45 PM</span>
<span style="font-size:12px;font-weight:400;color:#fff;left:639.60px;top:512.80px;transform:scaleX(0.8550);">serverless: aws</span>
<span style="font-size:12px;font-weight:400;color:#fff;left:721.80px;top:512.80px;transform:scaleX(0.9251);">runtime: nodejs</span>
<span style="font-size:12px;font-weight:400;color:#262b40;left:912.80px;top:513.00px;transform:scaleX(0.8850);">2.3s</span>
<span style="font-size:12px;font-weight:400;color:#262b40;left:17.80px;top:547.60px;transform:scaleX(0.8710);">API Gateway</span>
<span style="font-size:12px;font-weight:400;color:#6a7183;left:86.80px;top:547.60px;transform:scaleX(0.8438);">19</span>
<span style="font-size:11px;font-weight:700;color:#fff;left:111.86px;top:547.60px;transform:scaleX(0.9500);">1</span>
<span style="font-size:12px;font-weight:400;color:#262b40;left:210.00px;top:547.60px;transform:scaleX(0.9264);">POST /api/v1/checkout</span>
<span style="font-size:12px;font-weight:400;color:#262b40;left:465.40px;top:547.60px;transform:scaleX(0.9054);">2025-04-09 02:37:18 PM</span>
<span style="font-size:12px;font-weight:400;color:#fff;left:639.60px;top:547.40px;transform:scaleX(0.8803);">gateway: aws</span>
<span style="font-size:12px;font-weight:400;color:#fff;left:715.40px;top:547.40px;transform:scaleX(0.9427);">method: post</span>
<span style="font-size:12px;font-weight:400;color:#262b40;left:912.80px;top:547.60px;transform:scaleX(0.8850);">456ms</span>
<span style="font-size:12px;font-weight:400;color:#262b40;left:17.80px;top:582.20px;transform:scaleX(0.8776);">S3 Storage</span>
<span style="font-size:12px;font-weight:400;color:#6a7183;left:78.50px;top:582.20px;transform:scaleX(0.9041);">11</span>
<span style="font-size:12px;font-weight:400;color:#262b40;left:210.00px;top:582.20px;transform:scaleX(0.9275);">PUT object invoice-2025-04-09.pdf</span>
<span style="font-size:12px;font-weight:400;color:#262b40;left:465.40px;top:582.20px;transform:scaleX(0.9054);">2025-04-09 02:36:33 PM</span>
<span style="font-size:12px;font-weight:400;color:#fff;left:639.60px;top:582.00px;transform:scaleX(0.8859);">storage: s3</span>
<span style="font-size:12px;font-weight:400;color:#fff;left:703.40px;top:582.00px;transform:scaleX(0.9158);">bucket: invoices</span>
<span style="font-size:12px;font-weight:400;color:#262b40;left:912.80px;top:582.20px;transform:scaleX(0.8850);">234ms</span>
<span style="font-size:12px;font-weight:400;color:#262b40;left:17.80px;top:616.80px;transform:scaleX(0.9346);">RabbitMQ</span>
<span style="font-size:12px;font-weight:400;color:#6a7183;left:76.30px;top:616.80px;transform:scaleX(0.7980);">7</span>
<span style="font-size:12px;font-weight:400;color:#262b40;left:210.00px;top:616.80px;transform:scaleX(0.9531);">publish notification</span>
<span style="font-size:12px;font-weight:400;color:#262b40;left:465.40px;top:616.80px;transform:scaleX(0.9054);">2025-04-09 02:35:55 PM</span>
<span style="font-size:12px;font-weight:400;color:#fff;left:639.60px;top:616.60px;transform:scaleX(0.9235);">queue: rabbitmq</span>
<span style="font-size:12px;font-weight:400;color:#fff;left:732.30px;top:616.60px;transform:scaleX(0.9198);">exchange: notifications</span>
<span style="font-size:12px;font-weight:400;color:#262b40;left:912.80px;top:616.80px;transform:scaleX(0.8850);">8ms</span>
<span style="font-size:12px;font-weight:400;color:#262b40;left:17.80px;top:651.40px;transform:scaleX(0.9117);">Memcached</span>
<span style="font-size:12px;font-weight:400;color:#6a7183;left:85.40px;top:651.40px;transform:scaleX(0.7980);">4</span>
<span style="font-size:12px;font-weight:400;color:#262b40;left:210.00px;top:651.40px;transform:scaleX(0.8511);">SET session:abc123</span>
<span style="font-size:12px;font-weight:400;color:#262b40;left:465.40px;top:651.40px;transform:scaleX(0.9054);">2025-04-09 02:34:41 PM</span>
<span style="font-size:12px;font-weight:400;color:#fff;left:639.60px;top:651.20px;transform:scaleX(0.8841);">cache: memcached</span>
<span style="font-size:12px;font-weight:400;color:#fff;left:743.70px;top:651.20px;transform:scaleX(0.9203);">ttl: 3600</span>
<span style="font-size:12px;font-weight:400;color:#262b40;left:912.80px;top:651.40px;transform:scaleX(0.8850);">3ms</span>
<span style="font-size:12px;font-weight:400;color:#262b40;left:17.80px;top:686.00px;transform:scaleX(0.9136);">Nginx Proxy</span>
<span style="font-size:12px;font-weight:400;color:#6a7183;left:84.90px;top:686.00px;transform:scaleX(0.8438);">13</span>
<span style="font-size:11px;font-weight:700;color:#fff;left:109.96px;top:686.00px;transform:scaleX(0.9500);">2</span>
<span style="font-size:12px;font-weight:400;color:#262b40;left:210.00px;top:686.00px;transform:scaleX(0.9034);">proxy_pass to backend</span>
<span style="font-size:12px;font-weight:400;color:#262b40;left:465.40px;top:686.00px;transform:scaleX(0.9054);">2025-04-09 02:33:28 PM</span>
<span style="font-size:12px;font-weight:400;color:#fff;left:639.60px;top:685.80px;transform:scaleX(0.9119);">proxy: nginx</span>
<span style="font-size:12px;font-weight:400;color:#fff;left:709.80px;top:685.80px;transform:scaleX(0.9122);">upstream: backend</span>
<span style="font-size:12px;font-weight:400;color:#262b40;left:912.80px;top:686.00px;transform:scaleX(0.8850);">67ms</span>
<span style="font-size:12px;font-weight:400;color:#262b40;left:17.80px;top:720.60px;transform:scaleX(0.9134);">Prometheus</span>
<span style="font-size:12px;font-weight:400;color:#6a7183;left:84.90px;top:720.60px;transform:scaleX(0.7980);">8</span>
<span style="font-size:12px;font-weight:400;color:#262b40;left:210.00px;top:720.60px;transform:scaleX(0.9035);">scrape metrics</span>
<span style="font-size:12px;font-weight:400;color:#262b40;left:465.40px;top:720.60px;transform:scaleX(0.9054);">2025-04-09 02:32:15 PM</span>
<span style="font-size:12px;font-weight:400;color:#fff;left:639.60px;top:720.40px;transform:scaleX(0.9415);">monitoring: prometheus</span>
<span style="font-size:12px;font-weight:400;color:#fff;left:770.30px;top:720.40px;transform:scaleX(0.9272);">target: app</span>
<span style="font-size:12px;font-weight:400;color:#262b40;left:912.80px;top:720.60px;transform:scaleX(0.8850);">45ms</span>
<span style="font-size:12px;font-weight:400;color:#262b40;left:17.80px;top:755.20px;transform:scaleX(0.9178);">Docker Container</span>
<span style="font-size:12px;font-weight:400;color:#6a7183;left:111.50px;top:755.20px;transform:scaleX(0.7980);">5</span>
<span style="font-size:12px;font-weight:400;color:#262b40;left:210.00px;top:755.20px;transform:scaleX(0.9244);">container health check</span>
<span style="font-size:12px;font-weight:400;color:#262b40;left:465.40px;top:755.20px;transform:scaleX(0.9054);">2025-04-09 02:31:02 PM</span>
<span style="font-size:12px;font-weight:400;color:#fff;left:639.60px;top:755.00px;transform:scaleX(0.9179);">container: docker</span>
<span style="font-size:12px;font-weight:400;color:#fff;left:735.40px;top:755.00px;transform:scaleX(0.9161);">status: healthy</span>
<span style="font-size:12px;font-weight:400;color:#262b40;left:912.80px;top:755.20px;transform:scaleX(0.8850);">15ms</span>
<span style="font-size:12px;font-weight:400;color:#262b40;left:17.80px;top:789.80px;transform:scaleX(0.8959);">Kubernetes Pod</span>
<span style="font-size:12px;font-weight:400;color:#6a7183;left:102.90px;top:789.80px;transform:scaleX(0.8438);">16</span>
<span style="font-size:11px;font-weight:700;color:#fff;left:127.96px;top:789.80px;transform:scaleX(0.9500);">1</span>
<span style="font-size:12px;font-weight:400;color:#262b40;left:210.00px;top:789.80px;transform:scaleX(0.9331);">pod lifecycle management</span>
<span style="font-size:12px;font-weight:400;color:#262b40;left:465.40px;top:789.80px;transform:scaleX(0.9054);">2025-04-09 02:29:47 PM</span>
<span style="font-size:12px;font-weight:400;color:#fff;left:639.60px;top:789.60px;transform:scaleX(0.9036);">k8s: pod</span>
<span style="font-size:12px;font-weight:400;color:#fff;left:691.80px;top:789.60px;transform:scaleX(0.9107);">namespace: default</span>
<span style="font-size:12px;font-weight:400;color:#262b40;left:912.80px;top:789.80px;transform:scaleX(0.8850);">1.2s</span>
<span style="font-size:12px;font-weight:400;color:#262b40;left:17.80px;top:824.40px;transform:scaleX(0.9026);">Istio Service Mesh</span>
<span style="font-size:12px;font-weight:400;color:#6a7183;left:114.30px;top:824.40px;transform:scaleX(0.7980);">9</span>
<span style="font-size:12px;font-weight:400;color:#262b40;left:210.00px;top:824.40px;transform:scaleX(0.9195);">service-to-service auth</span>
<span style="font-size:12px;font-weight:400;color:#262b40;left:465.40px;top:824.40px;transform:scaleX(0.9054);">2025-04-09 02:28:33 PM</span>
<span style="font-size:12px;font-weight:400;color:#fff;left:639.60px;top:824.20px;transform:scaleX(0.8978);">mesh: istio</span>
<span style="font-size:12px;font-weight:400;color:#fff;left:702.60px;top:824.20px;transform:scaleX(0.8822);">mTLS: enabled</span>
<span style="font-size:12px;font-weight:400;color:#262b40;left:912.80px;top:824.40px;transform:scaleX(0.8850);">18ms</span>
<span style="font-size:17px;font-weight:400;color:#3c4257;left:1004.00px;top:86.80px;transform:scaleX(0.9166);">Trace ID:</span>
<span style="font-size:16px;font-weight:400;color:#3c4257;left:1072.90px;top:87.00px;transform:scaleX(1.0419);">45607994598546</span>
<span style="font-size:12px;font-weight:400;color:#2b6af6;left:1238.80px;top:86.00px;transform:scaleX(0.8643);">Logs</span>
<span style="font-size:12px;font-weight:400;color:#2b6af6;left:1269.60px;top:86.00px;transform:scaleX(0.9232);">Metrics</span>
<span style="font-size:12px;font-weight:400;color:#3c4257;left:1004.00px;top:131.00px;transform:scaleX(0.8822);">0ms</span>
<span style="font-size:12px;font-weight:400;color:#3c4257;left:1132.70px;top:131.00px;transform:scaleX(0.8964);">200ms</span>
<span style="font-size:12px;font-weight:400;color:#3c4257;left:1273.00px;top:131.00px;transform:scaleX(0.9075);">400ms</span>
<span style="font-size:12px;font-weight:400;color:#3c4257;left:1414.00px;top:131.00px;transform:scaleX(0.9075);">600ms</span>
<span style="font-size:12px;font-weight:400;color:#3c4257;left:1554.20px;top:131.00px;transform:scaleX(0.9075);">800ms</span>
<span style="font-size:12px;font-weight:400;color:#3c4257;left:1695.60px;top:131.00px;transform:scaleX(0.8331);">1.0s</span>
<span style="font-size:12px;font-weight:400;color:#2a2f45;-webkit-text-stroke:0.3px;left:1000.40px;top:261.60px;transform:scaleX(0.9146);">Span tree</span>
<span style="font-size:12px;font-weight:400;color:#1b1f30;-webkit-text-stroke:0.45px;left:1024.00px;top:298.30px;transform:scaleX(0.9269);">HTTP GET: /api/orders</span>
<span style="font-size:12px;font-weight:400;color:#5a6174;left:1026.50px;top:316.85px;transform:scaleX(0.9226);">http.server.request</span>
<span style="font-size:12px;font-weight:400;color:#5a6174;left:1309.11px;top:298.30px;transform:scaleX(0.8900);">15</span>
<span style="font-size:12px;font-weight:400;color:#1b1f30;-webkit-text-stroke:0.45px;left:1045.30px;top:347.80px;transform:scaleX(0.9776);">Authentication middleware</span>
<span style="font-size:12px;font-weight:400;color:#5a6174;left:1047.80px;top:366.35px;transform:scaleX(0.9262);">auth.middleware.verify</span>
<span style="font-size:12px;font-weight:400;color:#5a6174;left:1315.05px;top:347.80px;transform:scaleX(0.8900);">2</span>
<span style="font-size:12px;font-weight:400;color:#1b1f30;-webkit-text-stroke:0.45px;left:1045.30px;top:397.30px;transform:scaleX(0.9508);">Service operation</span>
<span style="font-size:12px;font-weight:400;color:#5a6174;left:1047.80px;top:415.85px;transform:scaleX(0.9226);">http.server.request</span>
<span style="font-size:12px;font-weight:400;color:#5a6174;left:1315.05px;top:397.30px;transform:scaleX(0.8900);">5</span>
<span style="font-size:12px;font-weight:400;color:#1b1f30;-webkit-text-stroke:0.45px;left:1066.60px;top:446.80px;transform:scaleX(0.9320);">Cache lookup</span>
<span style="font-size:12px;font-weight:400;color:#5a6174;left:1069.10px;top:465.35px;transform:scaleX(0.8920);">cache.redis.get</span>
<span style="font-size:12px;font-weight:400;color:#5a6174;left:1315.05px;top:446.80px;transform:scaleX(0.8900);">1</span>
<span style="font-size:12px;font-weight:400;color:#1b1f30;-webkit-text-stroke:0.45px;left:1066.60px;top:496.30px;transform:scaleX(0.9310);">Query database</span>
<span style="font-size:12px;font-weight:400;color:#5a6174;left:1069.10px;top:514.85px;transform:scaleX(0.9130);">db.query.select</span>
<span style="font-size:12px;font-weight:400;color:#5a6174;left:1315.05px;top:496.30px;transform:scaleX(0.8900);">2</span>
<span style="font-size:12px;font-weight:400;color:#1b1f30;-webkit-text-stroke:0.45px;left:1087.90px;top:545.80px;transform:scaleX(0.8834);">SELECT operation</span>
<span style="font-size:12px;font-weight:400;color:#5a6174;left:1090.40px;top:564.35px;transform:scaleX(0.9032);">db.sql.execute</span>
<span style="font-size:12px;font-weight:400;color:#5a6174;left:1315.05px;top:545.80px;transform:scaleX(0.8900);">1</span>
<span style="font-size:12px;font-weight:400;color:#1b1f30;-webkit-text-stroke:0.45px;left:1066.60px;top:595.30px;transform:scaleX(0.8994);">Process data</span>
<span style="font-size:12px;font-weight:400;color:#5a6174;left:1069.10px;top:613.85px;transform:scaleX(0.9199);">data.processor.transform</span>
<span style="font-size:12px;font-weight:400;color:#5a6174;left:1315.05px;top:595.30px;transform:scaleX(0.8900);">1</span>
<span style="font-size:12px;font-weight:400;color:#1b1f30;-webkit-text-stroke:0.45px;left:1045.30px;top:644.80px;transform:scaleX(0.9144);">Response serialisation</span>
<span style="font-size:12px;font-weight:400;color:#5a6174;left:1047.80px;top:663.35px;transform:scaleX(0.9044);">http.response.serialize</span>
<span style="font-size:12px;font-weight:400;color:#5a6174;left:1315.05px;top:644.80px;transform:scaleX(0.8900);">2</span>
<span style="font-size:12px;font-weight:400;color:#4a5164;left:1347.40px;top:263.70px;transform:scaleX(0.9483);clip-path:inset(0 0 0 1.5px)">0ms</span>
<span style="font-size:12px;font-weight:400;color:#4a5164;left:1405.30px;top:263.70px;transform:scaleX(0.8937);">200ms</span>
<span style="font-size:12px;font-weight:400;color:#4a5164;left:1478.50px;top:263.70px;transform:scaleX(0.8937);">400ms</span>
<span style="font-size:12px;font-weight:400;color:#4a5164;left:1551.90px;top:263.70px;transform:scaleX(0.8937);">600ms</span>
<span style="font-size:12px;font-weight:400;color:#4a5164;left:1625.00px;top:263.70px;transform:scaleX(0.8937);">800ms</span>
<span style="font-size:12px;font-weight:400;color:#4a5164;left:1696.00px;top:263.70px;transform:scaleX(0.7802);">1.0s</span>
<span style="font-size:10px;font-weight:400;color:#4a5164;left:1350.50px;top:316.00px;transform:scaleX(0.8780);z-index:11">1.0s</span>
<span style="font-size:10px;font-weight:400;color:#4a5164;left:1371.50px;top:342.00px;transform:scaleX(1.0128);z-index:13">850ms</span>
<span style="font-size:10px;font-weight:400;color:#4a5164;left:1424.00px;top:368.00px;transform:scaleX(1.0128);z-index:15">600ms</span>
<span style="font-size:10px;font-weight:400;color:#4a5164;left:1457.50px;top:394.00px;transform:scaleX(1.0128);z-index:17">700ms</span>
<span style="font-size:10px;font-weight:400;color:#4a5164;left:1490.00px;top:420.00px;transform:scaleX(1.0128);z-index:19">250ms</span>
<span style="font-size:10px;font-weight:400;color:#4a5164;left:1519.50px;top:446.00px;transform:scaleX(1.0128);z-index:21">250ms</span>
<span style="font-size:10px;font-weight:400;color:#4a5164;left:1424.20px;top:472.00px;transform:scaleX(1.0128);z-index:23">900ms</span>
<span style="font-size:10px;font-weight:400;color:#4a5164;left:1388.20px;top:498.00px;transform:scaleX(1.0128);z-index:25">900ms</span>
</div></body></html>
